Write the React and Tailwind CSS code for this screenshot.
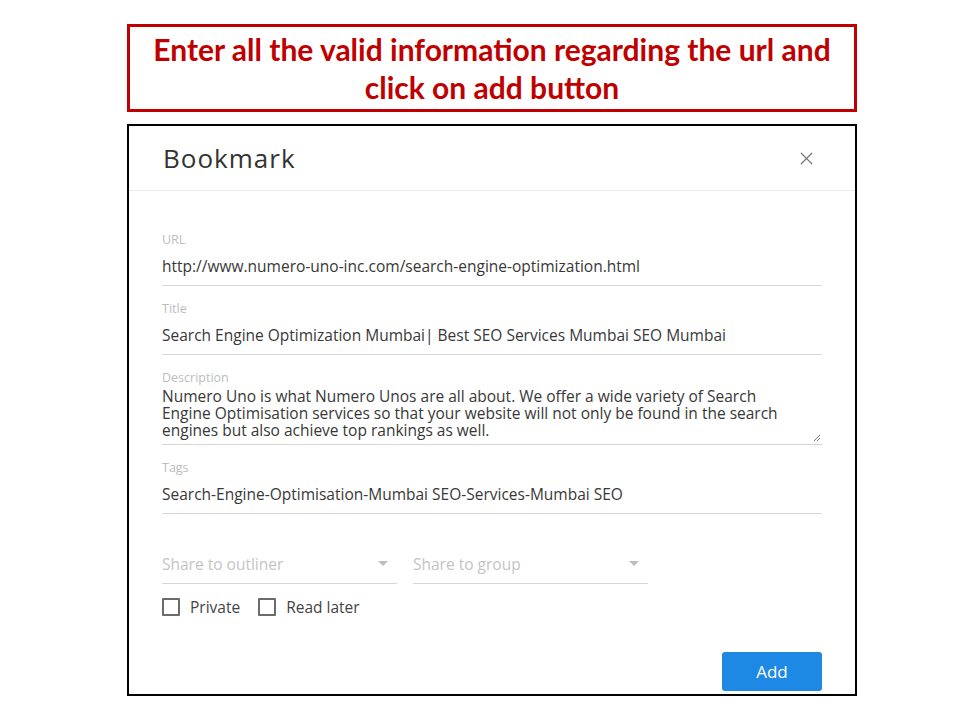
import { X } from 'lucide-react'

function Field({ label, value, className = '' }) {
  return (
    <div className={className}>
      <div className="text-[12.5px] leading-[16px] text-[#bdbdbd]">{label}</div>
      <div className="mt-[8px] border-b border-[#d6d6d6] pb-[9px] text-[15.5px] leading-[20px] text-[#383838]">{value}</div>
    </div>
  )
}

function SelectBox({ label }) {
  return (
    <div className="flex w-[235px] items-center justify-between border-b border-[#d6d6d6] pb-[9px] text-[15.5px] leading-[20px] text-[#c4c4c4]">
      <span>{label}</span>
      <svg width="10" height="6" viewBox="0 0 10 6" className="mr-[9px]">
        <path d="M0 0h10L5 5z" fill="#bdbdbd" />
      </svg>
    </div>
  )
}

function Check({ label }) {
  return (
    <label className="flex items-center gap-[10px]">
      <span className="h-[18px] w-[18px] rounded-[1px] border-2 border-[#6b6b6b]" />
      <span className="text-[15.5px] leading-[18px] text-[#444]">{label}</span>
    </label>
  )
}

export default function App() {
  return (
    <div className="h-[720px] w-[960px] bg-white pt-[24px] font-['Open_Sans',sans-serif]">
      <div className="ml-[127px] flex h-[88px] w-[730px] items-center justify-center border-[3px] border-[#c00000] text-center font-['Lato',sans-serif] text-[30px] font-bold leading-[38px] text-[#c00000]">
        <p>Enter all the valid information regarding the url and<br />click on add button</p>
      </div>

      <div className="ml-[127px] mt-[12px] h-[572px] w-[730px] border-2 border-black">
        <div className="flex h-[65px] items-center justify-between border-b border-[#ececec] pl-[34px] pr-[38px]">
          <h2 className="text-[26px] tracking-[1px] text-[#333]">Bookmark</h2>
          <X size={21} strokeWidth={1.4} className="text-[#777]" />
        </div>

        <div className="px-[33px] pt-[41px]">
          <Field label="URL" value="http://www.numero-uno-inc.com/search-engine-optimization.html" />
          <Field className="mt-[15px]" label="Title" value="Search Engine Optimization Mumbai| Best SEO Services Mumbai SEO Mumbai" />

          <div className="mt-[15px]">
            <div className="text-[12.5px] leading-[16px] text-[#bdbdbd]">Description</div>
            <div className="relative mt-[2px] border-b border-[#d6d6d6] pb-[5px] pr-[30px] text-[15.5px] leading-[17px] text-[#383838]">
              Numero Uno is what Numero Unos are all about. We offer a wide variety of Search Engine Optimisation services so that your website will not only be found in the search engines but also achieve top rankings as well.
              <svg width="8" height="8" viewBox="0 0 8 8" className="absolute bottom-[2px] right-[1px]">
                <path d="M7 1L1 7M7 4L4 7" stroke="#777" strokeWidth="1" />
              </svg>
            </div>
          </div>

          <Field className="mt-[15px]" label="Tags" value="Search-Engine-Optimisation-Mumbai SEO-Services-Mumbai SEO" />

          <div className="mt-[40px] flex gap-[16px]">
            <SelectBox label="Share to outliner" />
            <SelectBox label="Share to group" />
          </div>

          <div className="mt-[14px] flex gap-[18px]">
            <Check label="Private" />
            <Check label="Read later" />
          </div>

          <div className="mt-[36px] flex justify-end">
            <button className="h-[39px] w-[100px] rounded-[3px] bg-[#1e88e5] text-[17px] text-white">Add</button>
          </div>
        </div>
      </div>
    </div>
  )
}
